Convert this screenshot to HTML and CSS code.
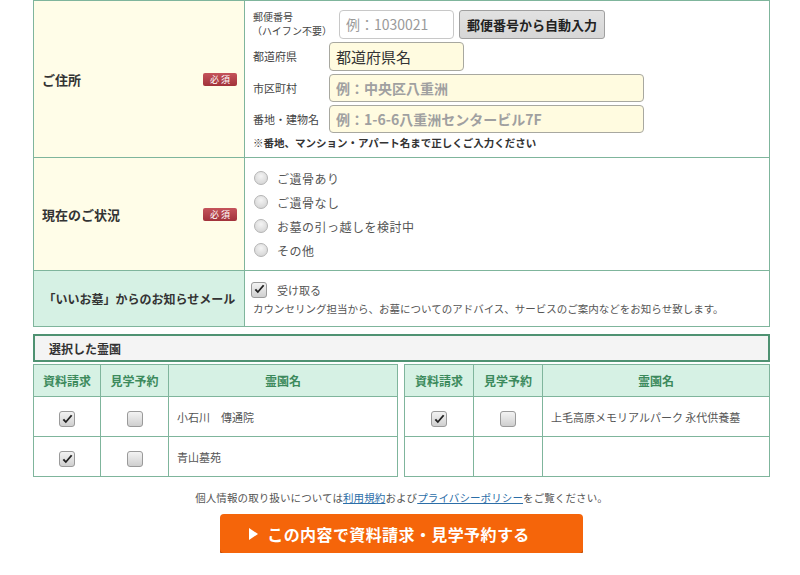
FILE: index.html
```html
<!DOCTYPE html>
<html lang="ja">
<head>
<meta charset="utf-8">
<title>お問い合わせフォーム</title>
<link rel="stylesheet" href="styles.css">
</head>
<body>
<div class="wrap">
  <table class="form-table">
    <tr class="row-address">
      <td class="th-cell"><div class="th-inner"><span>ご住所</span><span class="badge">必須</span></div></td>
      <td class="td-cell">
        <div class="addr">
          <div class="field-row">
            <div class="lbl lbl-zip"><div class="zip-l1">郵便番号</div><div class="zip-l2">（ハイフン不要）</div></div>
            <input class="inp inp-zip" type="text" placeholder="例：1030021">
            <button class="zip-btn" type="button">郵便番号から自動入力</button>
          </div>
          <div class="field-row">
            <div class="lbl">都道府県</div>
            <input class="inp inp-pref" type="text" value="都道府県名">
          </div>
          <div class="field-row">
            <div class="lbl">市区町村</div>
            <input class="inp inp-wide" type="text" placeholder="例：中央区八重洲">
          </div>
          <div class="field-row">
            <div class="lbl">番地・建物名</div>
            <input class="inp inp-wide" type="text" placeholder="例：1-6-6八重洲センタービル7F">
          </div>
          <p class="note">※番地、マンション・アパート名まで正しくご入力ください</p>
        </div>
      </td>
    </tr>
    <tr class="row-status">
      <td class="th-cell"><div class="th-inner"><span>現在のご状況</span><span class="badge">必須</span></div></td>
      <td class="td-cell">
        <ul class="radios">
          <li><span class="radio"></span>ご遺骨あり</li>
          <li><span class="radio"></span>ご遺骨なし</li>
          <li><span class="radio"></span>お墓の引っ越しを検討中</li>
          <li><span class="radio"></span>その他</li>
        </ul>
      </td>
    </tr>
    <tr class="row-mail">
      <td class="th-cell th-mint"><div class="th-center">「いいお墓」からのお知らせメール</div></td>
      <td class="td-cell">
        <div class="mail-check"><span class="cb checked"><svg viewBox="0 0 16 16" width="13" height="13"><path d="M2 8.5 L6 12.5 L14 3.5 L12.2 2.2 L6 9.6 L3.8 7 Z" fill="#222"/></svg></span><span>受け取る</span></div>
        <p class="mail-note">カウンセリング担当から、お墓についてのアドバイス、サービスのご案内などをお知らせ致します。</p>
      </td>
    </tr>
  </table>

  <div class="sel-head">選択した霊園</div>
  <div class="sel-tables">
    <table class="sel-table sel-left">
      <tr><th class="c1">資料請求</th><th class="c2">見学予約</th><th>霊園名</th></tr>
      <tr>
        <td class="ctr"><span class="cb checked"><svg viewBox="0 0 16 16" width="13" height="13"><path d="M2 8.5 L6 12.5 L14 3.5 L12.2 2.2 L6 9.6 L3.8 7 Z" fill="#222"/></svg></span></td>
        <td class="ctr"><span class="cb"></span></td>
        <td class="name">小石川　傳通院</td>
      </tr>
      <tr>
        <td class="ctr"><span class="cb checked"><svg viewBox="0 0 16 16" width="13" height="13"><path d="M2 8.5 L6 12.5 L14 3.5 L12.2 2.2 L6 9.6 L3.8 7 Z" fill="#222"/></svg></span></td>
        <td class="ctr"><span class="cb"></span></td>
        <td class="name">青山墓苑</td>
      </tr>
    </table>
    <table class="sel-table sel-right">
      <tr><th class="c1">資料請求</th><th class="c2">見学予約</th><th>霊園名</th></tr>
      <tr>
        <td class="ctr"><span class="cb checked"><svg viewBox="0 0 16 16" width="13" height="13"><path d="M2 8.5 L6 12.5 L14 3.5 L12.2 2.2 L6 9.6 L3.8 7 Z" fill="#222"/></svg></span></td>
        <td class="ctr"><span class="cb"></span></td>
        <td class="name">上毛高原メモリアルパーク 永代供養墓</td>
      </tr>
      <tr>
        <td></td>
        <td></td>
        <td></td>
      </tr>
    </table>
  </div>

  <p class="privacy">個人情報の取り扱いについては<a href="#">利用規約</a>および<a href="#">プライバシーポリシー</a>をご覧ください。</p>
  <div class="submit-wrap">
    <button class="submit" type="button"><span class="tri"></span>この内容で資料請求・見学予約する</button>
  </div>
</div>
</body>
</html>
```

FILE: styles.css
```css
* { box-sizing: border-box; }
html, body { margin: 0; padding: 0; background: #fff; }
body {
  font-family: "Noto Sans CJK JP", "Noto Sans", "Liberation Sans", sans-serif;
  color: #333;
}
.wrap {
  width: 737px;
  margin-left: 33px;
}
.form-table {
  width: 737px;
  border-collapse: collapse;
  table-layout: fixed;
}
.form-table td {
  border: 1px solid #7fb59c;
  vertical-align: middle;
  padding: 0;
}
.th-cell {
  width: 211px;
  background: #fffde8;
  padding: 0 7px 0 8px !important;
}
.th-mint { background: #d6f1e4; }
.th-inner {
  display: flex;
  justify-content: space-between;
  align-items: center;
  font-weight: bold;
  font-size: 13px;
  color: #333;
}
.th-center {
  text-align: center;
  font-weight: bold;
  font-size: 12px;
  color: #333;
}
.badge {
  display: flex;
  align-items: center;
  justify-content: center;
  width: 34px;
  height: 13px;
  border-radius: 2px;
  background: linear-gradient(#c5545b, #a1323a);
  color: #fff;
  font-size: 9px;
  font-weight: normal;
  letter-spacing: 2px;
  padding-left: 2px;
}
.row-address { height: 157px; }
.row-status { height: 113px; }
.row-mail { height: 56px; }
.td-cell { padding-left: 8px !important; }

.addr {
  display: flex;
  flex-direction: column;
  gap: 3px;
  padding-top: 1px;
}
.field-row {
  display: flex;
  align-items: center;
}
.lbl {
  width: 76px;
  font-size: 11px;
  color: #444;
  line-height: 14px;
}
.lbl-zip {
  width: 86px;
  font-size: 10px;
  line-height: 14.5px;
}
.zip-l1 { height: 14.5px; }
.zip-l2 { height: 14.5px; margin-left: -1px; }
.inp {
  height: 29px;
  border: 1px solid #a8a8a0;
  border-radius: 4px;
  background: #fffbe0;
  font-family: inherit;
  font-size: 14px;
  color: #333;
  padding: 0 6px;
  outline: none;
}
.inp::placeholder { color: #a0a0a0; font-weight: bold; }
.inp-zip {
  width: 115px;
  background: #fff;
  border-color: #c8c8c8;
}
.inp-zip::placeholder { font-weight: normal; color: #9a9a9a; }
.inp-pref { width: 135px; font-size: 15px; }
.inp-wide { width: 315px; height: 28px; }
.zip-btn {
  margin-left: 5px;
  height: 29px;
  width: 146px;
  background: linear-gradient(#e2e2e2, #d6d6d6);
  border: 1px solid #a0a0a0;
  border-radius: 3px;
  font-family: inherit;
  font-size: 13px;
  font-weight: bold;
  color: #222;
  padding: 0;
}
.note {
  margin: 0;
  font-size: 10.5px;
  font-weight: bold;
  color: #333;
  line-height: 14px;
}

.radios {
  list-style: none;
  margin: 0;
  padding: 0;
  display: flex;
  flex-direction: column;
  gap: 6px;
}
.radios li {
  display: flex;
  align-items: center;
  font-size: 12px;
  color: #555;
  height: 18px;
  letter-spacing: 0.5px;
}
.radio {
  width: 14px;
  height: 14px;
  border-radius: 50%;
  border: 1px solid #b5b5b5;
  background: radial-gradient(circle at 50% 35%, #f4f4f4, #cfcfcf);
  margin-right: 9px;
  margin-left: 1px;
}

.mail-check {
  display: flex;
  align-items: center;
  font-size: 11px;
  color: #555;
  margin-left: -2px;
}
.mail-check .cb { margin-right: 10px; }
.mail-note {
  margin: 3px 0 0;
  font-size: 10.5px;
  color: #555;
  letter-spacing: 0;
}
.cb {
  display: inline-flex;
  align-items: center;
  justify-content: center;
  width: 16px;
  height: 16px;
  border: 1px solid #9a9a9a;
  border-radius: 3px;
  background: linear-gradient(#f3f3f3, #cfcfcf);
  vertical-align: middle;
}

.sel-head {
  margin-top: 7px;
  height: 28px;
  border: 2px solid #4f9272;
  background: #f4f4f4;
  font-size: 12px;
  font-weight: bold;
  color: #333;
  display: flex;
  align-items: center;
  padding-left: 14px;
}
.sel-tables {
  display: flex;
  gap: 6px;
  margin-top: 2px;
}
.sel-table {
  border-collapse: collapse;
  table-layout: fixed;
}
.sel-left { width: 365px; }
.sel-right { width: 366px; }
.sel-table th, .sel-table td {
  border: 1px solid #7fb59c;
  padding: 0;
}
.sel-table th {
  height: 32px;
  background: #d6f1e4;
  color: #3c8a5c;
  font-size: 12px;
  font-weight: bold;
}
.sel-left .c1 { width: 67px; }
.sel-left .c2 { width: 68px; }
.sel-right .c1 { width: 69px; }
.sel-right .c2 { width: 69px; }
.sel-table td { height: 40px; }
.sel-table .ctr { text-align: center; }
.sel-table .name {
  font-size: 11px;
  color: #555;
  padding-left: 8px;
}

.privacy {
  margin: 13px 0 0;
  text-align: center;
  font-size: 10.5px;
  color: #555;
  letter-spacing: 0.1px;
}
.privacy a { color: #2c6ea8; text-decoration: underline; }
.submit-wrap {
  display: flex;
  justify-content: center;
  margin-top: 9px;
}
.submit {
  width: 363px;
  height: 39px;
  background: #f5650a;
  border: none;
  border-radius: 4px;
  box-shadow: 0 2px 0 #b84600;
  color: #fff;
  font-family: inherit;
  font-size: 16px;
  font-weight: bold;
  display: flex;
  align-items: center;
  justify-content: center;
  gap: 9px;
  letter-spacing: 0.4px;
  padding-right: 30px;
}
.tri {
  width: 0;
  height: 0;
  border-left: 9px solid #fff;
  border-top: 6px solid transparent;
  border-bottom: 6px solid transparent;
}
```
